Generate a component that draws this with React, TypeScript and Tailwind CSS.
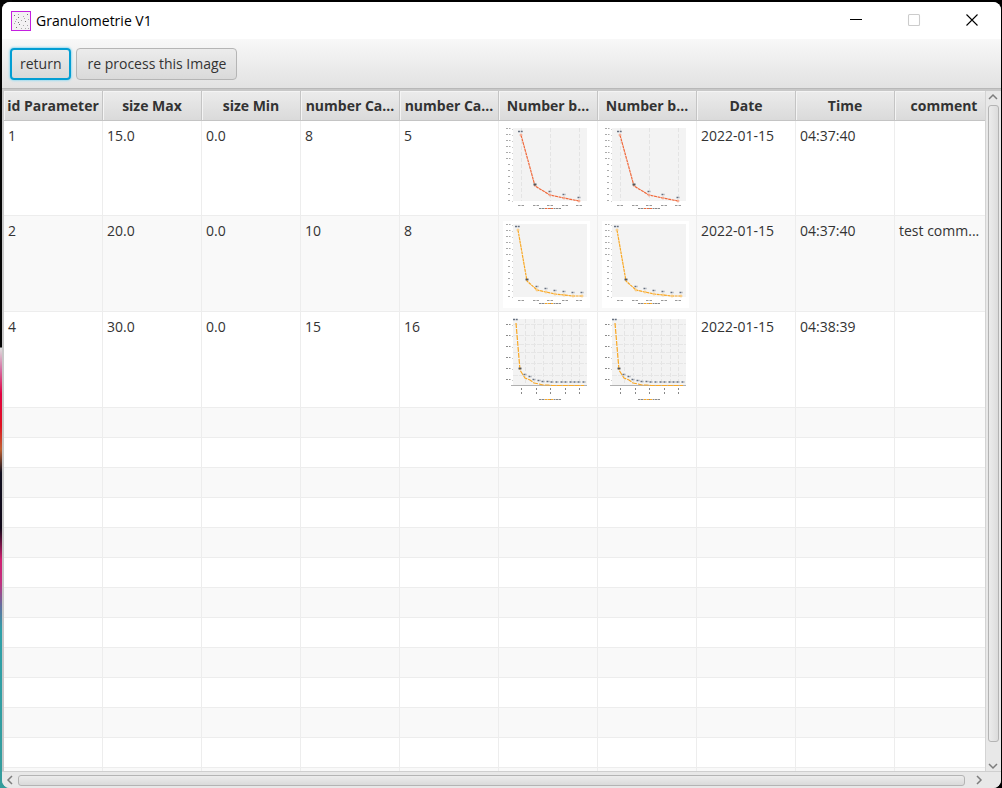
import React from "react";

type ChartSpec = {
  color: string;
  points: [number, number][];
  gridX: number[];
  gridY: number[];
  bottom: number;
  top: number;
  labelStep: number;
  tall?: boolean;
};

const fiveClasses: ChartSpec = {
  color: "#f0683a",
  points: [[18, 9], [32, 60], [47, 69], [61, 72], [76, 75]],
  gridX: [18, 47, 76],
  gridY: [],
  top: 2,
  bottom: 75,
  labelStep: 6,
};

const eightClasses: ChartSpec = {
  color: "#f9a825",
  points: [[15, 9], [24, 60], [34, 69], [43, 71], [52, 73], [61, 74], [70, 75], [79, 75]],
  gridX: [],
  gridY: [],
  top: 3,
  bottom: 76,
  labelStep: 6,
};

const sixteenClasses: ChartSpec = {
  color: "#f9a825",
  points: [
    [13, 6], [17, 53], [22, 61], [27, 63], [31, 66], [36, 67], [40, 68], [45, 68],
    [49, 68.5], [54, 68.5], [59, 68.5], [63, 68.5], [68, 68.5], [72, 68.5], [76, 68.5], [81, 68.5],
  ],
  gridX: [22, 31, 40, 49, 59, 68, 76],
  gridY: [7, 18, 27, 35, 46, 58],
  top: 2,
  bottom: 69,
  labelStep: 11,
  tall: true,
};

function Chart({ spec, label }: { spec: ChartSpec; label: string }) {
  const { color, points, gridX, gridY, top, bottom, labelStep, tall } = spec;
  const marks: number[] = [];
  for (let y = tall ? 7 : top; y <= bottom; y += labelStep) marks.push(y);
  return (
    <svg role="img" aria-label={label} viewBox="0 0 87 87" className="block size-[87px]">
      <rect width="87" height="87" fill="#fff" />
      <rect x="10" y={top} width="74" height={bottom - top} fill="#f3f3f3" />
      {gridX.map((x) => (
        <line key={x} x1={x + 0.5} x2={x + 0.5} y1={top} y2={bottom} stroke="#e4e4e4" strokeDasharray="4 2" />
      ))}
      {gridY.map((y) => (
        <line key={y} x1="10" x2="84" y1={y + 0.5} y2={y + 0.5} stroke="#e6e6e6" strokeDasharray="5 1" />
      ))}
      {marks.map((y, i) => (
        <g key={y}>
          <line
            x1={i > 5 && !tall ? 5 : 3}
            x2="8"
            y1={y + 0.5}
            y2={y + 0.5}
            stroke={tall ? "#8a8a8a" : "#aaa"}
            strokeDasharray="2 1 1 0.5"
          />
          <line x1="9" x2="10" y1={y + 1.5} y2={y + 1.5} stroke="#ccc" />
        </g>
      ))}
      {tall && <line x1="8" x2="84" y1="68.5" y2="68.5" stroke="#b0b0b0" />}
      {[18, 33, 47, 62, 76].map((x) =>
        tall ? (
          <line key={x} x1={x + 0.5} x2={x + 0.5} y1="71" y2="77" stroke="#888" strokeDasharray="2 2" />
        ) : (
          <line key={x} x1={x - 3} x2={x + 3} y1="79.5" y2="79.5" stroke="#999" strokeDasharray="2 0.5 1 0.5" />
        ),
      )}
      <polyline
        points={points.map((p) => p.join(",")).join(" ")}
        fill="none"
        stroke={color}
        strokeWidth="1.2"
        strokeDasharray={tall ? "5 1" : "3 0.6"}
      />
      {points.map(([x, y], i) => (
        <g key={x}>
          {!tall && i !== 1 && <circle cx={x} cy={y} r="1" fill="#fff" stroke={color} strokeWidth="0.6" />}
          <line
            x1={x - (i === 0 ? 3 : 1.5)}
            x2={x + (i === 0 ? 2 : 1.5)}
            y1={y - (i === 1 ? 1.5 : 3.5)}
            y2={y - (i === 1 ? 1.5 : 3.5)}
            stroke={i === 1 ? "#555" : "#667080"}
            strokeWidth={i === 1 ? 1.8 : 1.4}
            strokeDasharray={i === 1 ? undefined : "2 0.7"}
          />
        </g>
      ))}
      <line x1="36" x2="58" y1="82.5" y2="82.5" stroke="#888" strokeDasharray="2 0.5 3 0.5 2 0.5" />
      <line x1="42" x2="50" y1="82.5" y2="82.5" stroke={color} strokeDasharray="2 1" />
    </svg>
  );
}

const headers = [
  "id Parameter", "size Max", "size Min", "number Ca...", "number Ca...",
  "Number b...", "Number b...", "Date", "Time", "comment",
];

const rows = [
  { cells: ["1", "15.0", "0.0", "8", "5"], chart: fiveClasses, date: "2022-01-15", time: "04:37:40", comment: "", tone: "h-[95px] bg-white" },
  { cells: ["2", "20.0", "0.0", "10", "8"], chart: eightClasses, date: "2022-01-15", time: "04:37:40", comment: "test comm...", tone: "h-[96px] bg-[#f9f9f9]" },
  { cells: ["4", "30.0", "0.0", "15", "16"], chart: sixteenClasses, date: "2022-01-15", time: "04:38:39", comment: "", tone: "h-[96px] bg-white" },
];

const td = "overflow-hidden whitespace-nowrap border-b border-r border-[#ededed] p-0 pl-1 pt-[5px] align-top";

function Arrow({ d, label }: { d: string; label: string }) {
  return (
    <button type="button" aria-label={label} className="flex size-[14px] shrink-0 items-center justify-center">
      <svg viewBox="0 0 12 12" className="size-3" fill="none" stroke="#7d7d7d" strokeWidth="1.5">
        <path d={d} />
      </svg>
    </button>
  );
}

const specks = [
  [3, 4], [7, 3], [12, 5], [16, 3], [5, 8], [10, 9], [14, 10], [17, 8], [3, 12], [8, 13],
  [12, 14], [16, 14], [5, 16], [10, 17], [14, 17], [7, 6], [13, 7], [4, 10], [7, 11], [17, 17],
];

export default function App() {
  return (
    <div className="h-screen overflow-hidden bg-black bg-[linear-gradient(to_bottom,#050505_0_44%,#ddd_44.2%,#d66aa0_47%,#e00040_50%,#e01020_54%,#c06030_57%,#101020_60%,#100818_67%,#d02070_71%,#c03080_74%,#6070a0_77%,#2fa0a8_80%,#359c9c)] bg-[length:12px_100%] bg-no-repeat pl-0.5 pr-px pt-0.5 font-['Open_Sans','Noto_Sans',sans-serif] text-[14px] leading-5 text-[#333]">
      <div className="flex h-full flex-col overflow-hidden rounded-lg bg-[#e8e8e8]">
        <header className="flex h-[37px] shrink-0 items-center bg-white pl-[9px] text-black">
          <svg viewBox="0 0 20 20" className="size-5" aria-hidden="true">
            <rect x="0.5" y="0.5" width="19" height="19" fill="#f3f1f3" stroke="#c41fe0" />
            {specks.map(([x, y], i) => (
              <rect key={i} x={x} y={y} width="1" height="1" fill={i % 3 ? "#aaa" : "#777"} />
            ))}
          </svg>
          <h1 className="ml-[5px] flex-1">Granulometrie V1</h1>
          <div className="flex h-full pb-px">
            {[
              ["Minimize", "M0 5.5H12", "#000"],
              ["Maximize", "M1.5 .5h9a1 1 0 0 1 1 1v9a1 1 0 0 1-1 1h-9a1 1 0 0 1-1-1v-9a1 1 0 0 1 1-1Z", "#ccc"],
              ["Close", "M.5.5 11.5 11.5M11.5.5.5 11.5", "#000"],
            ].map(([name, d, stroke]) => (
              <button key={name} type="button" aria-label={name} className="flex h-full w-[58px] items-center justify-center">
                <svg viewBox="0 0 12 12" className="size-3 overflow-visible" fill="none" stroke={stroke} strokeWidth="1.1">
                  <path d={d} />
                </svg>
              </button>
            ))}
          </div>
        </header>

        <div className="flex h-[50px] shrink-0 items-center gap-[5px] border-b border-[#b8b8b8] bg-linear-to-b from-[#f8f8f8] to-[#e2e2e2] pl-2">
          <button type="button" className="h-8 rounded-[4px] border-2 border-[#039ed3] bg-linear-to-b from-[#ececec] to-[#d9d9d9] px-2 shadow-[0_0_2px_1px_#9fdcf0]">
            return
          </button>
          <button type="button" className="h-8 rounded-[4px] border border-[#b5b5b5] bg-linear-to-b from-[#ececec] to-[#dadada] px-[10px]">
            re process this Image
          </button>
        </div>

        <main className="flex min-h-0 flex-1 border-l-2 border-t-2 border-[#c8c8c8]">
          <div className="min-w-0 flex-1 overflow-hidden bg-white">
            <table className="w-[990px] table-fixed border-separate border-spacing-0">
              <thead>
                <tr className="h-[30px]">
                  {headers.map((h, i) => (
                    <th key={i} scope="col" className="overflow-hidden whitespace-nowrap border-b border-r border-[#c4c4c4] bg-linear-to-b from-[#ececec] to-[#dadada] p-0 text-center font-bold shadow-[inset_1px_1px_0_#f4f4f4]">
                      {h}
                    </th>
                  ))}
                </tr>
              </thead>
              <tbody>
                {rows.map((r) => (
                  <tr key={r.cells[0]} className={r.tone}>
                    {r.cells.map((c, i) => (
                      <td key={i} className={td}>{c}</td>
                    ))}
                    <td className={td}><Chart spec={r.chart} label="Number by size" /></td>
                    <td className={td}><Chart spec={r.chart} label="Number by size" /></td>
                    <td className={td}>{r.date}</td>
                    <td className={td}>{r.time}</td>
                    <td className={td}>{r.comment}</td>
                  </tr>
                ))}
                {Array.from({ length: 13 }, (_, n) => (
                  <tr key={n} className="h-[30px] odd:bg-white even:bg-[#f9f9f9]">
                    {headers.map((_, i) => (
                      <td key={i} className="border-b border-r border-[#ededed] p-0" />
                    ))}
                  </tr>
                ))}
              </tbody>
            </table>
          </div>
          <div className="flex w-4 shrink-0 flex-col items-center border-l border-[#d4d4d4] bg-[#e8e8e8] pr-px">
            <Arrow label="Scroll up" d="M2 7 6 3l4 4" />
            <div className="mb-[15px] w-[11px] flex-1 rounded-[3px] border border-[#b4b4b4] bg-linear-to-r from-[#ececec] to-[#dcdcdc]" />
            <Arrow label="Scroll down" d="M2 6l4 4 4-4" />
          </div>
        </main>
        <div className="flex h-[17px] shrink-0 items-center border-t border-[#cfcfcf] bg-[#e8e8e8] pl-0.5 pr-4">
          <Arrow label="Scroll left" d="M7 2 3 6l4 4" />
          <div className="mr-1.5 h-[11px] flex-1 rounded-[3px] border border-[#b4b4b4] bg-linear-to-b from-[#ececec] to-[#dadada]" />
          <Arrow label="Scroll right" d="M5 2l4 4-4 4" />
        </div>
      </div>
    </div>
  );
}
